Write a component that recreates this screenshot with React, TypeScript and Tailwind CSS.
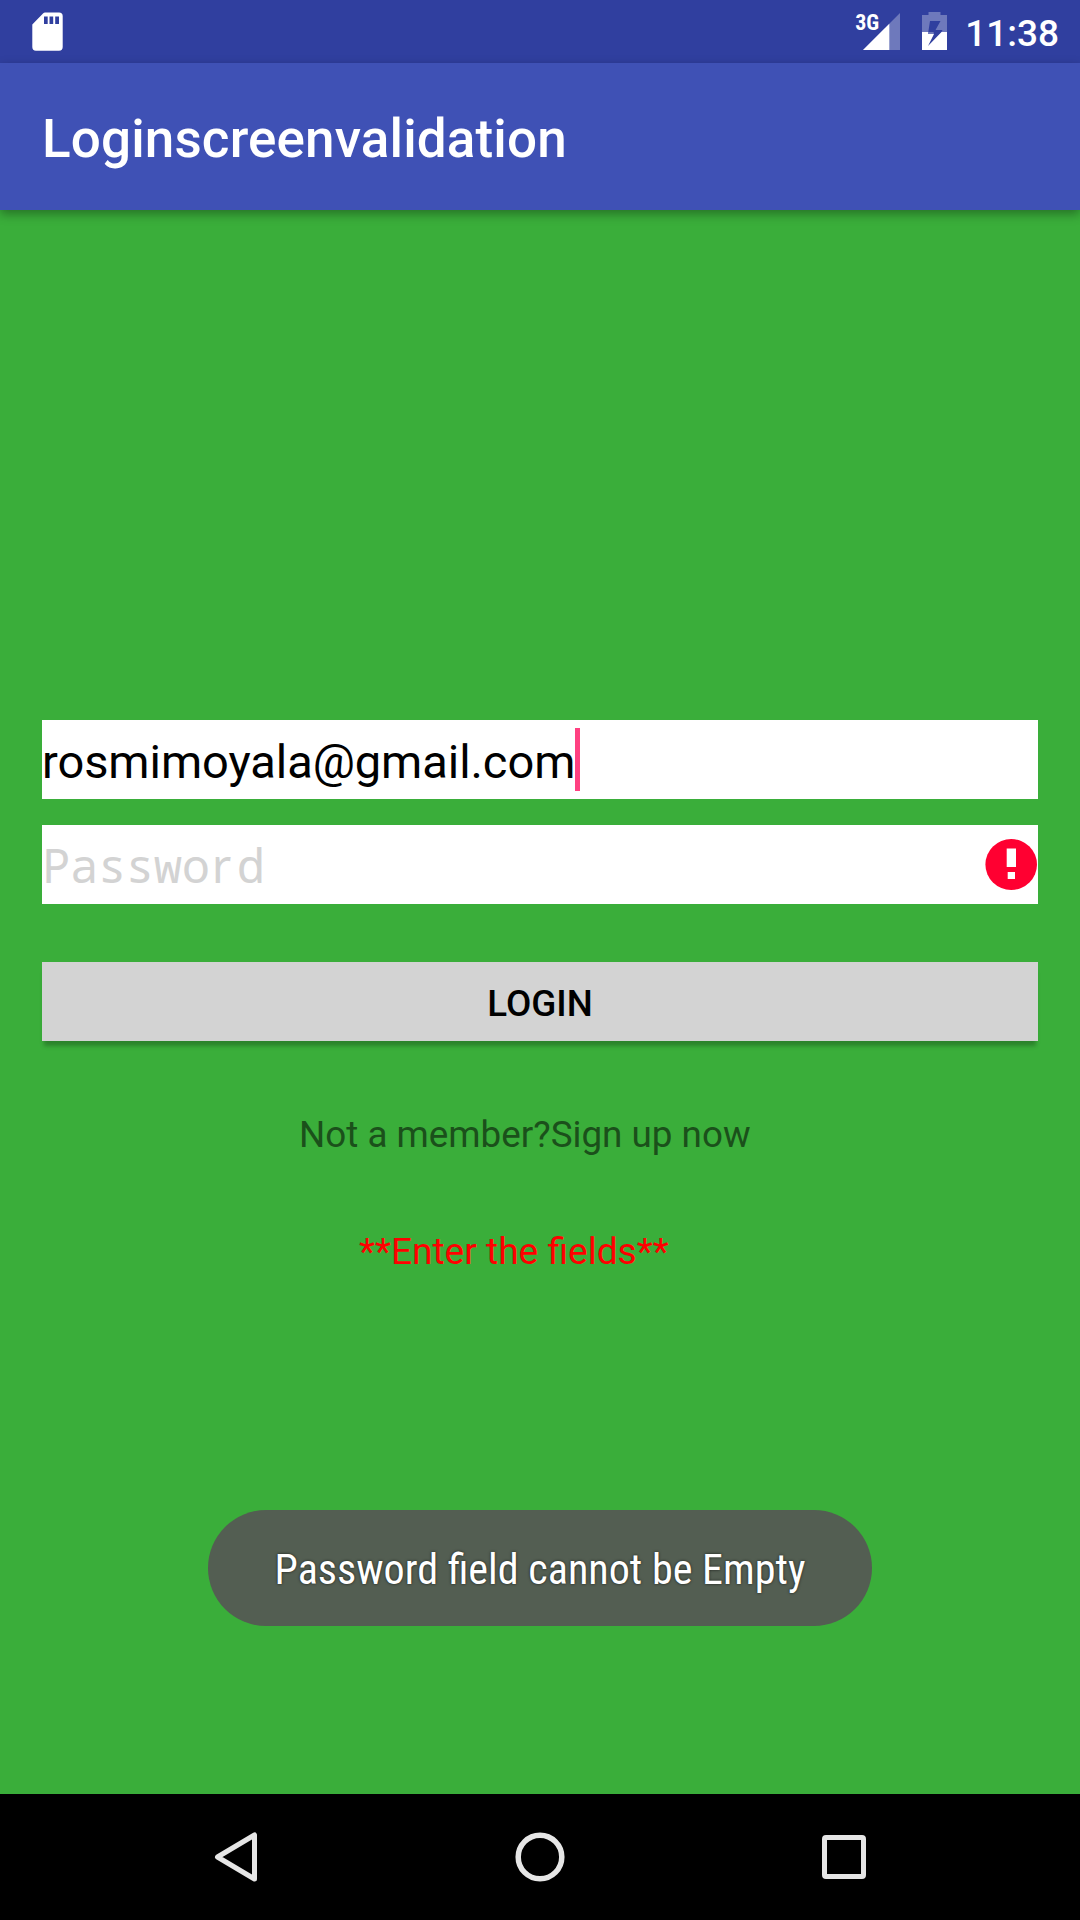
import React from "react";

function SdCardIcon() {
  return (
    <svg className="h-[40px] w-[32px]" viewBox="0 0 32 40" fill="none">
      <path
        fillRule="evenodd"
        fill="#fff"
        d="M12.500 .5H27Q30.700 .5 30.700 4V35Q30.700 38.700 27 38.700H4Q.3 38.700 .3 35V12.500L11 1.500Q12 .5 13 .5ZM12 4.500V12H15.700V4.500ZM17.500 4.500V12H21.200V4.500ZM23.200 4.500V12H27V4.500Z"
      />
    </svg>
  );
}

function SignalIcon() {
  return (
    <svg className="h-[37px] w-[37px]" viewBox="0 0 38 38">
      <path d="M38 0V38H0Z" fill="#fff" fillOpacity=".3" />
      <path d="M27 11V38H0Z" fill="#fff" />
    </svg>
  );
}

function BatteryIcon() {
  return (
    <svg className="h-[38px] w-[25px]" viewBox="0 0 25 38">
      <path
        fillRule="evenodd"
        fill="#fff"
        fillOpacity=".3"
        d="M6.500 0H18.500V3H25V20H19.500L20.500 18H13.500L18.500 9H8L6 22H12L11.500 20H0V3H6.500Z"
      />
      <path
        fillRule="evenodd"
        fill="#fff"
        d="M0 20H6.200L6 22H12L6 34L19.500 20H25V38H0Z"
      />
    </svg>
  );
}

function ErrorIcon() {
  return (
    <svg className="h-[51px] w-[52px]" viewBox="0 0 52 51">
      <ellipse cx="26.200" cy="25.500" rx="25.800" ry="25.500" fill="#ff0031" />
      <path d="M21.700 9.500H31V28H21.700ZM22.700 33H30V40H22.700Z" fill="#fff" />
    </svg>
  );
}

function StatusBar() {
  return (
    <header className="flex h-[63px] items-start bg-[#303f9f] pl-[32px] pr-[21px] text-white">
      <div className="pt-[12px]">
        <SdCardIcon />
      </div>
      <div className="ml-auto flex items-start">
        <span className="-mr-[15px] mt-[12px] text-[22px] leading-[22px] font-bold font-['Roboto_Condensed','Roboto',sans-serif]">3G</span>
        <div className="mt-[12.500px] -ml-[1px]">
          <SignalIcon />
        </div>
        <div className="mt-[12px] ml-[22px]">
          <BatteryIcon />
        </div>
        <span className="ml-[18px] mt-[12px] text-[37px] leading-[44px] font-medium">11:38</span>
      </div>
    </header>
  );
}

function NavBar() {
  return (
    <nav className="flex h-[126px] items-start bg-black pt-[38px] pl-[214px]">
      <svg className="h-[50px] w-[44px]" viewBox="0 0 44 50" fill="none" stroke="#e6e6e6" strokeWidth="5" strokeLinejoin="round">
        <path d="M40.500 3V47L3.500 25Z" />
      </svg>
      <svg className="ml-[257px] h-[50px] w-[50px]" viewBox="0 0 50 50" fill="none" stroke="#e6e6e6" strokeWidth="5.500">
        <circle cx="25" cy="25" r="21.800" />
      </svg>
      <svg className="mt-[3px] ml-[257px] h-[44px] w-[44px]" viewBox="0 0 44 44" fill="none" stroke="#e6e6e6" strokeWidth="5">
        <rect x="2.500" y="2.500" width="39" height="39" rx="1.500" />
      </svg>
    </nav>
  );
}

export default function App() {
  return (
    <div className="flex h-[1920px] w-[1080px] flex-col overflow-hidden bg-[#3aae3a] font-['Roboto',sans-serif]">
      <StatusBar />
      <div className="flex h-[147px] items-center bg-[#3f51b5] px-[42px] pt-[5px] shadow-[0_4px_10px_rgba(0,0,0,0.35)]">
        <h1 className="text-[53px] leading-[62px] font-medium tracking-[0.14px] text-white">Loginscreenvalidation</h1>
      </div>
      <main className="flex flex-1 flex-col px-[42px] pt-[510px]">
        <div className="flex h-[79px] items-start bg-white pt-[8px]">
          <span className="text-[47px] leading-[67px] tracking-[-0.06px] text-black">rosmimoyala@gmail.com</span>
          <span className="h-[63px] w-[5px] bg-[#ff4081]" />
        </div>
        <div className="mt-[26px] flex h-[79px] items-center justify-between bg-white pr-[1px]">
          <span className="text-[47.25px] leading-[60px] tracking-[-0.4px] text-[#d3d3d3] font-['Noto_Sans_Mono','DejaVu_Sans_Mono',monospace]">
            Passwo<span className="ml-[2px] mr-[6px] font-['Noto_Sans',sans-serif]">r</span>d
          </span>
          <ErrorIcon />
        </div>
        <button className="mt-[58px] h-[79px] bg-[#d3d3d3] pt-[4px] text-[36.75px] leading-[44px] font-medium text-black shadow-[0_7px_4px_-2px_rgba(0,0,0,0.25)]">LOGIN</button>
        <p className="mt-[72px] pl-[257px] text-[36.8px] leading-[44px] text-[#1b501b]">Not a member?Sign up now</p>
        <p className="mt-[73px] pl-[317px] text-[37.1px] leading-[44px] text-[#ff0000]">**Enter the fields**</p>
        <div className="mt-[236px] flex h-[116px] w-[664px] items-center justify-center self-center rounded-full bg-[#535e52] pt-[4px]">
          <span className="text-[42.1px] leading-[50px] text-white font-['Roboto_Condensed','Roboto',sans-serif] [font-stretch:75%] [text-shadow:0_0_3px_rgba(0,0,0,0.7)]">Password field cannot be Empty</span>
        </div>
      </main>
      <NavBar />
    </div>
  );
}
